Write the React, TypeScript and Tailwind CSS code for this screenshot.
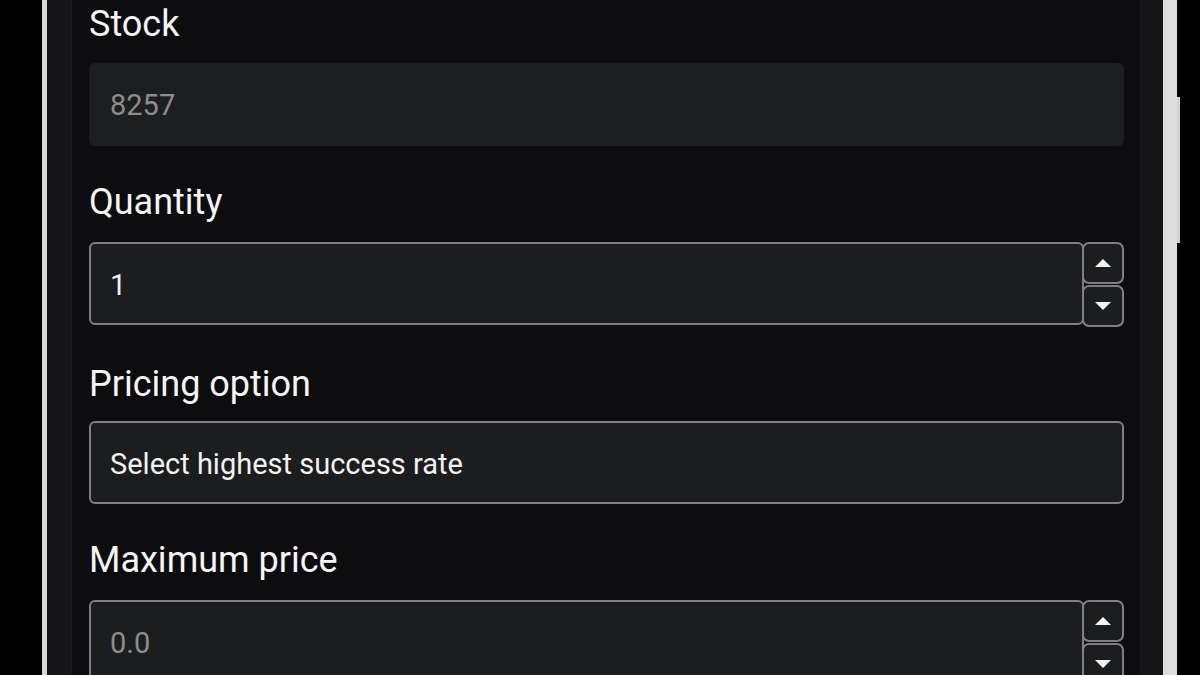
import React from "react";

function Spinner() {
  return (
    <div className="flex flex-col w-[42px] shrink-0 -ml-[2px]">
      <div className="h-[42px] shrink-0 rounded-[7px] border-2 border-[#808082] bg-[#1c1d1f] flex items-center justify-center">
        <svg width="18" height="10" viewBox="0 0 18 10"><path d="M9 1 L17 9 L1 9 Z" fill="#f2f2f2" /></svg>
      </div>
      <div className="h-[42px] shrink-0 mt-[1px] rounded-[7px] border-2 border-[#808082] bg-[#1c1d1f] flex items-center justify-center">
        <svg width="18" height="10" viewBox="0 0 18 10"><path d="M1 1 L17 1 L9 9 Z" fill="#f2f2f2" /></svg>
      </div>
    </div>
  );
}

function Label({ children, className = "" }: { children: React.ReactNode; className?: string }) {
  return (
    <div className={"shrink-0 h-[40px] leading-[40px] text-[36px] text-[#f4f4f4] " + className}>{children}</div>
  );
}

export default function App() {
  return (
    <div
      className="w-[1200px] h-[675px] overflow-hidden bg-black flex"
      style={{ fontFamily: "Roboto, 'Noto Sans', sans-serif" }}
    >
      <div className="w-[42px] shrink-0 bg-black" />
      <div className="w-[5px] shrink-0 bg-[#d8d8d8]" />
      <div className="w-[25px] shrink-0 bg-[#151517] border-r border-[#1d1d1f]" />
      <div className="flex-1 bg-[#0d0d0f] pl-[17px] pr-[16px] flex flex-col">
        <Label className="mt-[4px]">Stock</Label>
        <div className="shrink-0 mt-[19px] h-[83px] rounded-[6px] bg-[#1d1e20] flex items-center pl-[21px] pt-[2px] text-[29px] text-[#8c8c8e]">
          8257
        </div>

        <Label className="mt-[36px]">Quantity</Label>
        <div className="shrink-0 mt-[20px] flex">
          <div className="flex-1 h-[83px] rounded-[6px] border-2 border-[#808082] bg-[#1c1d1f] flex items-center pl-[19px] pt-[5px] text-[29px] text-[#f2f2f2]">
            1
          </div>
          <Spinner />
        </div>

        <Label className="mt-[37px]">Pricing option</Label>
        <div className="shrink-0 mt-[17px] h-[83px] rounded-[6px] border-2 border-[#808082] bg-[#1c1d1f] flex items-center pl-[19px] pt-[5px] text-[29px] text-[#f2f2f2]">
          Select highest success rate
        </div>

        <Label className="mt-[36px]">Maximum price</Label>
        <div className="shrink-0 mt-[20px] flex">
          <div className="flex-1 h-[83px] rounded-[6px] border-2 border-[#808082] bg-[#1c1d1f] flex items-center pl-[19px] pt-[5px] text-[29px] text-[#8c8c8e]">
            0.0
          </div>
          <Spinner />
        </div>
      </div>
      <div className="w-[23px] shrink-0 bg-[#141416] border-l border-[#1a1a1c]" />
      <div className="w-[14px] shrink-0 bg-[#dcdcdc]" />
      <div className="w-[23px] shrink-0 bg-black relative">
        <div className="absolute left-0 top-[97px] w-[3px] h-[146px] bg-[#d2d2d2]" />
      </div>
    </div>
  );
}
